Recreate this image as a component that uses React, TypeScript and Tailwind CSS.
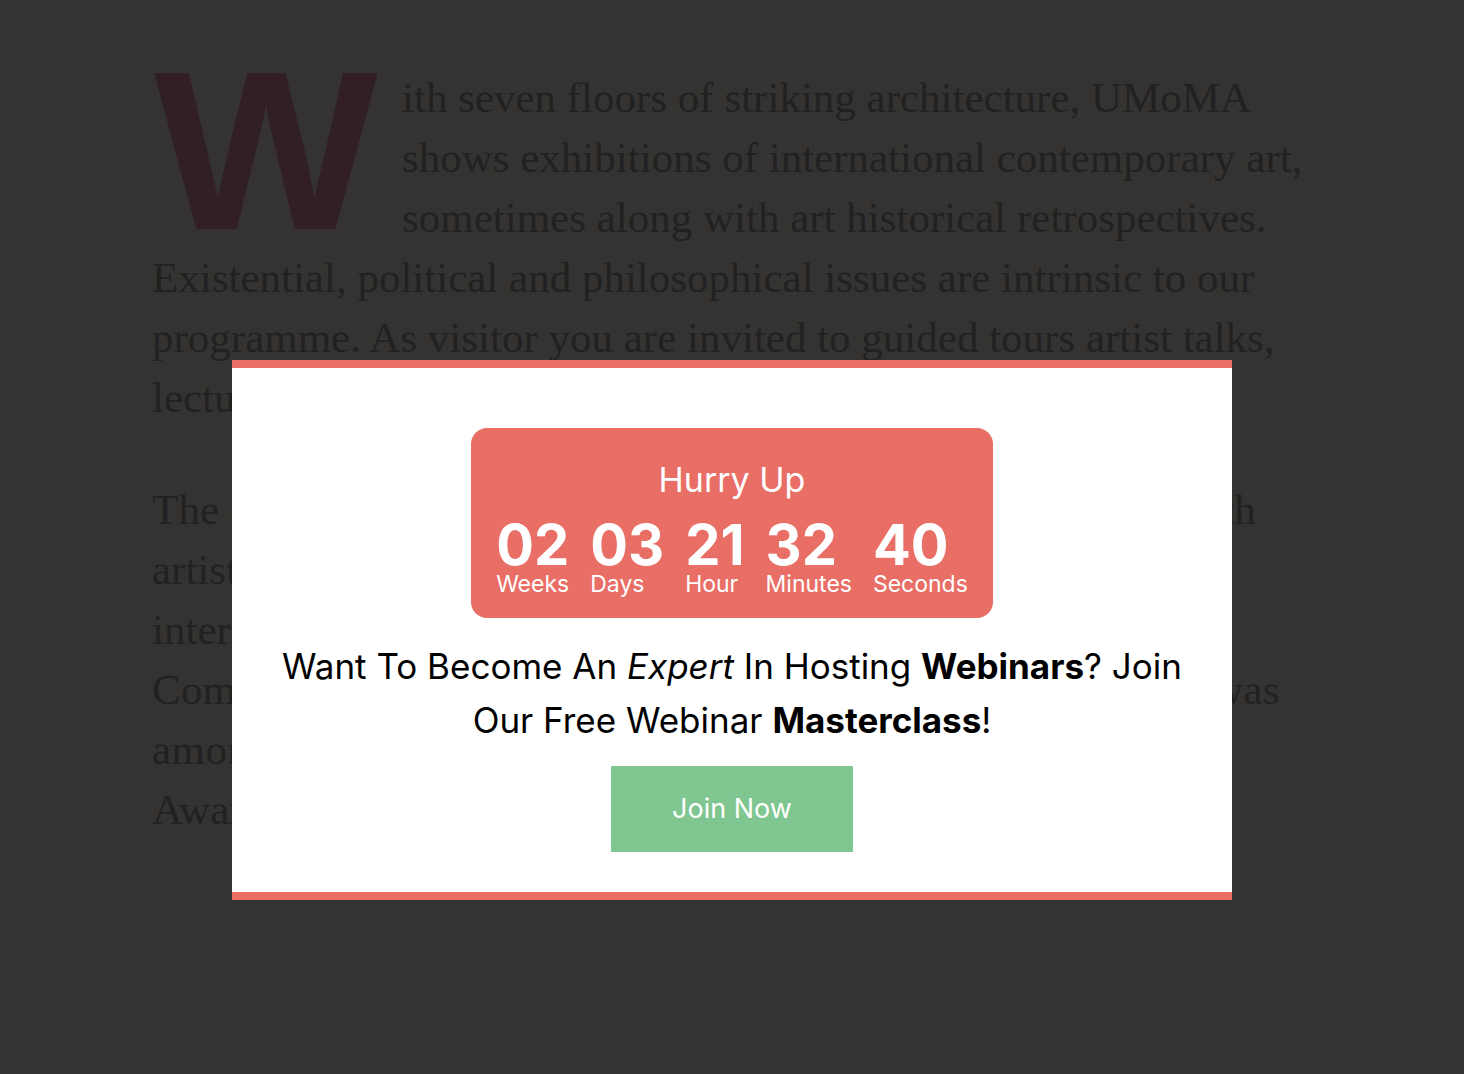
import React from 'react';

const units = [
  { value: '02', label: 'Weeks' },
  { value: '03', label: 'Days' },
  { value: '21', label: 'Hour' },
  { value: '32', label: 'Minutes' },
  { value: '40', label: 'Seconds' },
];

const App = () => {
  return (
    <div className="relative w-full min-h-[1074px] bg-[#343332] overflow-hidden">
      {/* Article behind the popup */}
      <div className="pl-[152px] pt-[68px] text-[#222121] text-[43px] leading-[60px] whitespace-nowrap font-['Liberation_Serif',serif]">
        <p>
          <span className="float-left w-[250px] h-[180px]">
            <span className="block mt-[-30px] ml-[2px] origin-left scale-x-[1.05] text-[226px] leading-none font-bold text-[#321f25] font-['Liberation_Sans',sans-serif]">
              W
            </span>
          </span>
          ith seven floors of striking architecture, UMoMA<br />
          shows exhibitions of international contemporary art,<br />
          sometimes along with art historical retrospectives.<br />
          Existential, political and philosophical issues are intrinsic to our<br />
          programme. As visitor you are invited to guided tours artist talks,<br />
          lectures, film screenings and other events with free admission
        </p>
        <p className="mt-[52px]">
          <span className="tracking-[0.17px]">The exhibitions are produced by UMoMA in collaboration with</span><br />
          artists and museums around the world and they often attract<br />
          international attention. UMoMA received a Special<br />
          <span className="tracking-[0.2px]">Commendation in European Museum of the Year Award and was</span><br />
          <span className="tracking-[0.45px]">among the finalists for the Council of Europe Museum Prize.</span><br />
          Award in 2012.
        </p>
      </div>

      {/* Popup */}
      <div className="absolute inset-x-0 top-[360px] flex justify-center font-['Inter',sans-serif]">
        <div className="w-[1000px] bg-white border-y-8 border-[#ec6f67] px-12 pt-[60px] pb-[40px] flex flex-col items-center">
          <div className="w-[522px] h-[190px] rounded-2xl bg-[#e96e66] text-white flex flex-col items-center">
            <div className="mt-[32px] text-[34px] leading-[40px]">Hurry Up</div>
            <div className="mt-[17px] flex gap-[21px]">
              {units.map((u) => (
                <div key={u.label} className="flex flex-col items-start">
                  <span className="text-[56px] leading-[56px] font-bold">{u.value}</span>
                  <span className="text-[23px] leading-[22px]">{u.label}</span>
                </div>
              ))}
            </div>
          </div>

          <p className="mt-[21px] text-center text-black text-[35px] leading-[54px] whitespace-nowrap">
            Want To Become An <em>Expert</em> In Hosting <strong>Webinars</strong>? Join
            <br />
            Our Free Webinar <strong>Masterclass</strong>!
          </p>

          <button className="mt-[19px] w-[242px] h-[86px] bg-[#80c691] text-white text-[27px]">
            Join Now
          </button>
        </div>
      </div>
    </div>
  );
};

export default App;
